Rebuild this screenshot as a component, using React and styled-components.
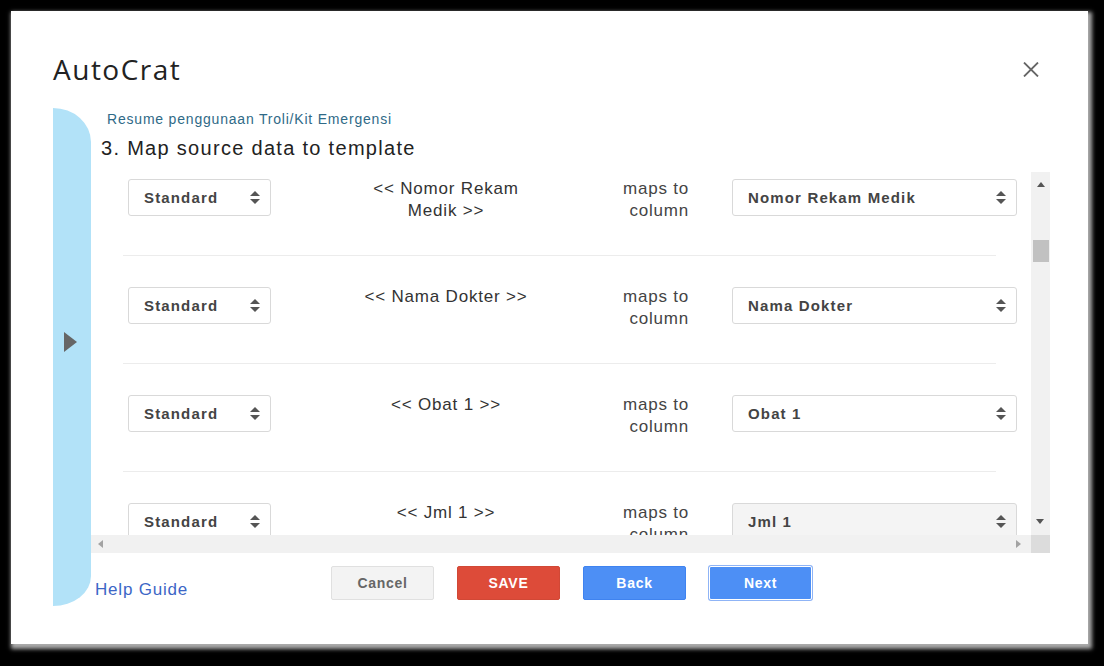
import React from 'react'
import styled, { createGlobalStyle } from 'styled-components'

const GlobalStyle = createGlobalStyle`
  html, body {
    margin: 0;
    padding: 0;
    background: #000;
  }
  body {
    font-family: "Liberation Sans", Arial, sans-serif;
    width: 1104px;
    height: 666px;
    overflow: hidden;
  }
`

const Page = styled.div`
  padding: 11px 0 0 11px;
`

const Dialog = styled.div`
  width: 1077px;
  height: 633px;
  background: #fff;
  box-shadow: 2px 3px 4px 2px rgba(190, 190, 190, 0.9);
  display: flex;
  flex-direction: column;
`

const Header = styled.div`
  height: 97px;
  box-sizing: border-box;
  padding: 41px 49px 0 42px;
  display: flex;
  align-items: flex-start;
  justify-content: space-between;
`

const Title = styled.h1`
  margin: 0;
  font-family: "Open Sans", Lato, sans-serif;
  font-weight: 400;
  font-size: 28px;
  line-height: 34px;
  letter-spacing: 1.5px;
  color: #222;
`

const CloseButton = styled.button`
  border: 0;
  background: none;
  padding: 0;
  margin-top: 10px;
  width: 16px;
  height: 15px;
  display: flex;
  cursor: pointer;
`

const Body = styled.div`
  display: flex;
  padding-left: 42px;
`

const SidePanel = styled.div`
  width: 38px;
  height: 498px;
  flex: none;
  background: #b2e2f8;
  border-radius: 0 38px 38px 0 / 0 34px 30px 0;
  box-sizing: border-box;
  padding: 224px 0 0 11px;
`

const Main = styled.div`
  width: 959px;
  display: flex;
  flex-direction: column;
  padding-top: 4px;
`

const Subtitle = styled.div`
  font-size: 14px;
  line-height: 15px;
  letter-spacing: 0.8px;
  color: #2f6a87;
  padding-left: 16px;
`

const Heading = styled.h2`
  margin: 9px 0 12px;
  padding-left: 10px;
  font-size: 20px;
  line-height: 24px;
  letter-spacing: 1.3px;
  font-weight: 400;
  color: #222;
`

const ScrollBox = styled.div`
  display: grid;
  grid-template-columns: 940px 19px;
  grid-template-rows: 363px 18px;
`

const Viewport = styled.div`
  overflow: hidden;
`

const List = styled.div`
  transform: translateY(-24px);
`

const Row = styled.div`
  height: 76px;
  padding: 31px 0 0 37px;
  display: flex;
  align-items: flex-start;
`

const Divider = styled.div`
  height: 1px;
  background: #ececec;
  margin: 0 35px 0 32px;
`

const Select = styled.div`
  flex: none;
  box-sizing: border-box;
  width: ${p => p.$width}px;
  height: 37px;
  margin-left: ${p => p.$offset || 0}px;
  border: 1px solid #d9d9d9;
  border-radius: 3px;
  background: ${p => (p.$hover ? '#f4f4f4' : '#fff')};
  padding: 0 10px 0 15px;
  display: flex;
  align-items: center;
  justify-content: space-between;
  font-size: 15px;
  letter-spacing: 1.15px;
  font-weight: 700;
  color: #444;
`

const FieldName = styled.div`
  flex: none;
  width: 180px;
  margin-left: 85px;
  margin-top: -1px;
  text-align: center;
  font-size: 17px;
  letter-spacing: 0.8px;
  line-height: 22px;
  color: #333;
`

const MapsTo = styled.div`
  flex: none;
  width: 80px;
  margin-left: 73px;
  margin-top: -1px;
  text-align: right;
  font-size: 17px;
  letter-spacing: 0.8px;
  line-height: 22px;
  color: #444;
`

const VBar = styled.div`
  background: #f1f1f1;
  display: flex;
  flex-direction: column;
  align-items: center;
  padding-top: 10px;
  position: relative;
`

const VThumb = styled.div`
  position: absolute;
  left: 2px;
  right: 1px;
  top: 68px;
  height: 22px;
  background: #c1c1c1;
`

const VDown = styled.div`
  position: absolute;
  bottom: 11px;
  left: 5px;
  display: flex;
`

const HBar = styled.div`
  background: #f1f1f1;
  display: flex;
  align-items: center;
  justify-content: space-between;
  padding: 0 10px 0 7px;
`

const Corner = styled.div`
  background: #dcdcdc;
`

const Footer = styled.div`
  display: flex;
  align-items: flex-end;
  margin-top: 13px;
  padding-left: 4px;
`

const HelpLink = styled.a`
  width: 236px;
  font-size: 17px;
  line-height: 20px;
  letter-spacing: 0.8px;
  margin-bottom: 0;
  color: #3c66c6;
  text-decoration: none;
  cursor: pointer;
`

const Buttons = styled.div`
  display: flex;
  gap: 23px;
`

const variants = {
  cancel: { bg: '#f3f3f3', border: '#e0e0e0', color: '#666', ring: 'none' },
  save: { bg: '#dd4b39', border: '#d14836', color: '#fff', ring: 'none' },
  blue: { bg: '#4d8ff5', border: '#3f83f0', color: '#fff', ring: 'none' },
  focus: { bg: '#4d8ff5', border: '#fff', color: '#fff', ring: '0 0 0 1px #8fb4f6' },
}

const Button = styled.button`
  width: 103px;
  height: 34px;
  box-sizing: border-box;
  border-radius: 2px;
  border: 1px solid ${p => variants[p.$variant].border};
  background: ${p => variants[p.$variant].bg};
  color: ${p => variants[p.$variant].color};
  box-shadow: ${p => variants[p.$variant].ring};
  font-family: "Liberation Sans", Arial, sans-serif;
  font-size: 14px;
  letter-spacing: 0.7px;
  font-weight: 700;
  cursor: pointer;
`

const UpDown = () => (
  <svg width="10" height="13" viewBox="0 0 10 13">
    <path d="M5 0 L10 5 H0 Z" fill="#555" />
    <path d="M5 13 L10 8 H0 Z" fill="#555" />
  </svg>
)

const Tri = ({ dir, color = '#555' }) => {
  const paths = {
    up: 'M4 0 L8 5 H0 Z',
    down: 'M4 5 L8 0 H0 Z',
    left: 'M0 4 L5 0 V8 Z',
    right: 'M5 4 L0 0 V8 Z',
  }
  const vertical = dir === 'up' || dir === 'down'
  return (
    <svg width={vertical ? 8 : 5} height={vertical ? 5 : 8} viewBox={vertical ? '0 0 8 5' : '0 0 5 8'}>
      <path d={paths[dir]} fill={color} />
    </svg>
  )
}

const rows = [
  { field: '<< Nomor Rekam Medik >>', column: 'Nomor Rekam Medik' },
  { field: '<< Nama Dokter >>', column: 'Nama Dokter' },
  { field: '<< Obat 1 >>', column: 'Obat 1' },
  { field: '<< Jml 1 >>', column: 'Jml 1', hover: true },
]

export default function App() {
  return (
    <>
      <GlobalStyle />
      <Page>
        <Dialog>
          <Header>
            <Title>AutoCrat</Title>
            <CloseButton aria-label="Close">
              <svg width="16" height="15" viewBox="0 0 16 15">
                <path d="M1 0.5 L15 14.5 M15 0.5 L1 14.5" stroke="#666" strokeWidth="1.8" />
              </svg>
            </CloseButton>
          </Header>
          <Body>
            <SidePanel>
              <svg width="13" height="20" viewBox="0 0 13 20">
                <path d="M0 0 L13 10 L0 20 Z" fill="#666" />
              </svg>
            </SidePanel>
            <Main>
              <Subtitle>Resume penggunaan Troli/Kit Emergensi</Subtitle>
              <Heading>3. Map source data to template</Heading>
              <ScrollBox>
                <Viewport>
                  <List>
                    {rows.map((r, i) => (
                      <React.Fragment key={r.column}>
                        {i > 0 && <Divider />}
                        <Row>
                          <Select $width={143}>
                            Standard
                            <UpDown />
                          </Select>
                          <FieldName>{r.field}</FieldName>
                          <MapsTo>maps to column</MapsTo>
                          <Select $width={285} $offset={43} $hover={r.hover}>
                            {r.column}
                            <UpDown />
                          </Select>
                        </Row>
                      </React.Fragment>
                    ))}
                  </List>
                </Viewport>
                <VBar>
                  <Tri dir="up" />
                  <VThumb />
                  <VDown>
                    <Tri dir="down" />
                  </VDown>
                </VBar>
                <HBar>
                  <Tri dir="left" color="#a3a3a3" />
                  <Tri dir="right" color="#a3a3a3" />
                </HBar>
                <Corner />
              </ScrollBox>
              <Footer>
                <HelpLink>Help Guide</HelpLink>
                <Buttons>
                  <Button $variant="cancel">Cancel</Button>
                  <Button $variant="save">SAVE</Button>
                  <Button $variant="blue">Back</Button>
                  <Button $variant="focus">Next</Button>
                </Buttons>
              </Footer>
            </Main>
          </Body>
        </Dialog>
      </Page>
    </>
  )
}
